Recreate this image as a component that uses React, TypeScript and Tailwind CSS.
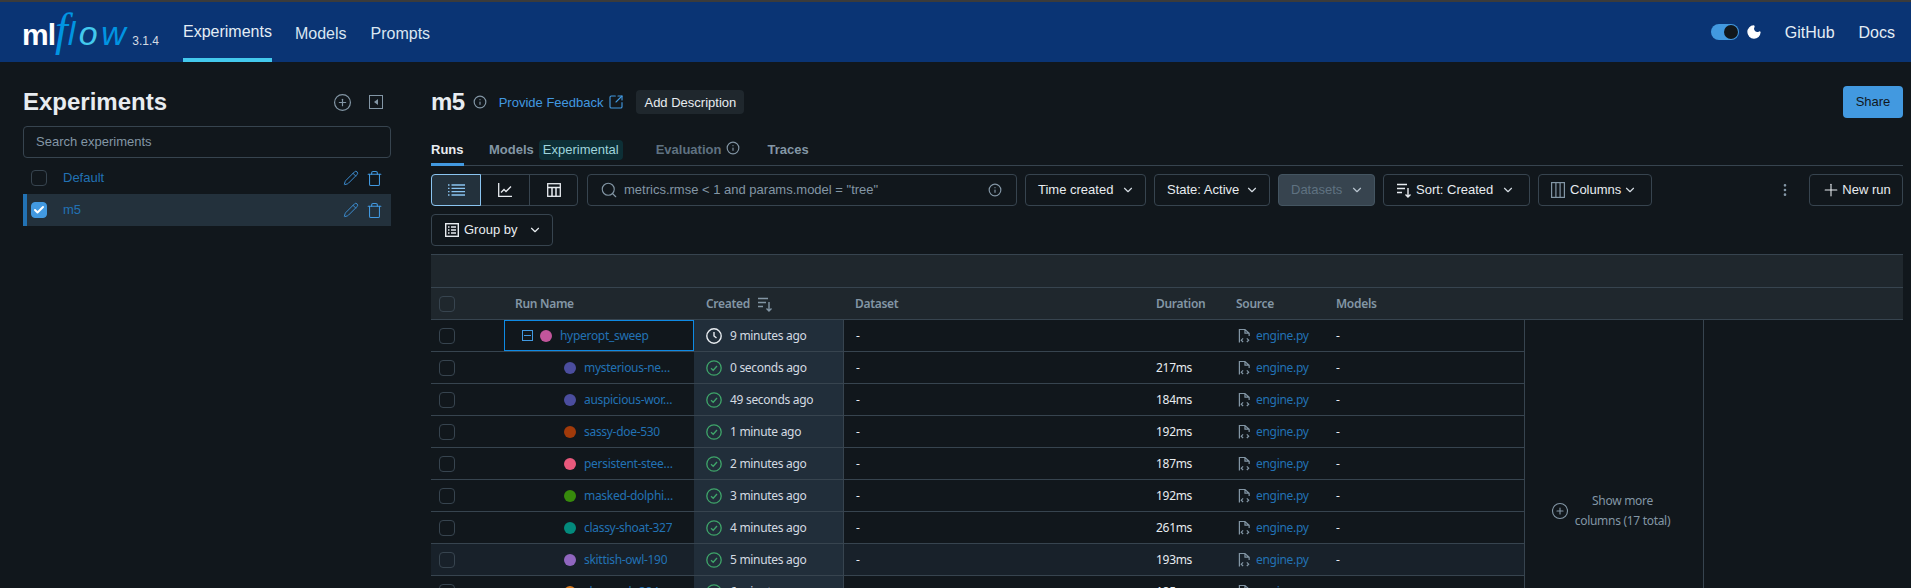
import { Info, SquareArrowOutUpRight, Search, ChevronDown, Pencil, Trash, Check, PlusCircle, Plus, Moon, EllipsisVertical } from 'lucide-react';

const runs = [
  { name: 'mysterious-ne…', color: 'bg-[#4b4d9e]', time: '0 seconds ago', dur: '217ms' },
  { name: 'auspicious-wor…', color: 'bg-[#4b4d9e]', time: '49 seconds ago', dur: '184ms' },
  { name: 'sassy-doe-530', color: 'bg-[#a13a0a]', time: '1 minute ago', dur: '192ms' },
  { name: 'persistent-stee…', color: 'bg-[#e8597c]', time: '2 minutes ago', dur: '187ms' },
  { name: 'masked-dolphi…', color: 'bg-[#378a0c]', time: '3 minutes ago', dur: '192ms' },
  { name: 'classy-shoat-327', color: 'bg-[#038a7c]', time: '4 minutes ago', dur: '261ms' },
  { name: 'skittish-owl-190', color: 'bg-[#9066bf]', time: '5 minutes ago', dur: '193ms', hover: true },
  { name: 'clean-cub-384', color: 'bg-[#d87a1e]', time: '6 minutes ago', dur: '185ms' },
];

function Box({ checked }: { checked?: boolean }) {
  return (
    <span className={`w-4 h-4 rounded-[4px] border flex items-center justify-center shrink-0 ${checked ? 'bg-[#4299e0] border-[#4299e0]' : 'border-[#37444f]'}`}>
      {checked && <Check className="w-3 h-3 text-white" strokeWidth={4} />}
    </span>
  );
}

function SortIcon({ className }: { className: string }) {
  return (
    <svg viewBox="0 0 16 16" fill="none" stroke="currentColor" strokeWidth="1.4" className={className}>
      <path d="M1 2.5h10M1 6.5h8M1 10.5h5M12 6v9M9.5 12.5 12 15l2.5-2.5" />
    </svg>
  );
}

function FileCode() {
  return (
    <svg viewBox="0 0 14 16" fill="none" stroke="#8396a5" strokeWidth="1.3" className="w-[13px] h-4 shrink-0">
      <path d="M1.5 15V1h6l4.5 4v3M7.5 1v4H12" />
      <path d="M5.5 10.5 3.5 12.5l2 2M9.5 10.5l2 2-2 2" />
    </svg>
  );
}

function ListIcon() {
  return (
    <svg viewBox="0 0 17 12" fill="none" stroke="currentColor" strokeWidth="1.3" className="w-[17px] h-3">
      <path d="M3.5 1h13.500M3.500 4.300h13.500M3.500 7.700h13.500M3.500 11h13.500M0 1h1.500M0 4.300h1.500M0 7.700h1.500M0 11h1.500" />
    </svg>
  );
}

function ChartIcon() {
  return (
    <svg viewBox="0 0 14 14" fill="none" stroke="currentColor" strokeWidth="1.3" className="w-[14px] h-[14px]">
      <path d="M.7 0v13.300H14M3 9.500 6 6.500l2 2L13 3.500" />
    </svg>
  );
}

function TableIcon() {
  return (
    <svg viewBox="0 0 14 14" fill="none" stroke="currentColor" strokeWidth="1.3" className="w-[14px] h-[14px]">
      <rect x=".7" y=".7" width="12.600" height="12.600" />
      <path d="M.7 4.500h12.600M5 4.500v8.800M9 4.500v8.800" strokeWidth="1.500" />
    </svg>
  );
}

function ColumnsIcon() {
  return (
    <svg viewBox="0 0 14 16" fill="none" stroke="#8396a5" strokeWidth="1.2" className="w-[14px] h-4 shrink-0">
      <rect x=".6" y=".6" width="12.800" height="14.800" />
      <path d="M4.900.6v14.800M9.100.6v14.800" />
    </svg>
  );
}

function GroupIcon() {
  return (
    <svg viewBox="0 0 14 14" fill="none" stroke="currentColor" strokeWidth="1.4" className="w-[14px] h-[14px] shrink-0">
      <rect x=".7" y=".7" width="12.600" height="12.600" />
      <path d="M3 4h1.500M6 4h5M3 7h1.500M6 7h5M3 10h1.500M6 10h5" />
    </svg>
  );
}

function ToolButton({ label, width, disabled, wide }: { label: React.ReactNode; width: string; disabled?: boolean; wide?: boolean }) {
  return (
    <div className={`h-8 rounded border flex items-center justify-between pl-3 text-[13px] ${wide ? 'pr-[14px]' : 'pr-[10px]'} ${width} ${disabled ? 'bg-[#37444f] border-[#445561] text-[#5f7281]' : 'border-[#37444f] text-[#e8ecf0]'}`}>
      {label}
      <ChevronDown className={`w-[14px] h-[14px] ${disabled ? 'text-[#b8c4ce]' : 'text-[#d4dbe2]'}`} />
    </div>
  );
}

function Row({ run, parent }: { run: (typeof runs)[number] | null; parent?: boolean }) {
  return (
    <div className={`h-8 flex items-stretch border-b border-[#37444f] w-[1093px] shrink-0 ${run?.hover ? 'bg-[#18212a]' : ''}`}>
      <div className="w-[73px] pl-2 flex items-center"><Box /></div>
      <div className={`w-[190px] flex items-center ${parent ? 'outline outline-1 -outline-offset-1 outline-[#0e8ae4] pl-[18px]' : 'pl-[60px]'}`}>
        {parent && (
          <span className="w-[11px] h-[11px] border border-[#4299e0] flex items-center justify-center mr-[7px]">
            <span className="w-[7px] h-px bg-[#4299e0]" />
          </span>
        )}
        <span className={`w-3 h-3 rounded-full shrink-0 ${parent ? 'bg-[#c2559b]' : run!.color}`} />
        <span className="text-[#2272b4] truncate ml-2 pt-px">{parent ? 'hyperopt_sweep' : run!.name}</span>
      </div>
      <div className="w-[150px] bg-[#212e3a] border-r border-[#37444f] flex items-center pl-3 gap-2 text-[#d4dbe2]">
        {parent ? (
          <svg viewBox="0 0 16 16" fill="none" stroke="#e8ecf0" strokeWidth="1.4" className="w-4 h-4"><circle cx="8" cy="8" r="7.200" /><path d="M8 4v4l2.500 2" /></svg>
        ) : (
          <svg viewBox="0 0 16 16" fill="none" stroke="#3fa56a" strokeWidth="1.300" className="w-4 h-4"><circle cx="8" cy="8" r="7.200" /><path d="M5 8.300 7.200 10.300 11 6" /></svg>
        )}
        <span className="pt-px">{parent ? '9 minutes ago' : run!.time}</span>
      </div>
      <div className="w-[312px] pl-3 flex items-center text-[#e8ecf0]">-</div>
      <div className="w-[81px] flex items-center text-[#e8ecf0] pt-px">{run?.dur}</div>
      <div className="w-[99px] pl-px flex items-center gap-[5px]"><FileCode /><span className="text-[#2272b4] pt-px">engine.py</span></div>
      <div className="flex-1 flex items-center text-[#e8ecf0]">-</div>
    </div>
  );
}

export default function App() {
  return (
    <div className="w-[1911px] h-[588px] overflow-hidden bg-[#11171c] text-[13px] text-[#e8ecf0] font-['Liberation_Sans',sans-serif] flex flex-col">
      <div className="h-[2px] bg-[#3b3b3b] shrink-0" />
      <header className="h-[60px] shrink-0 bg-[#0a3474] flex items-stretch pl-[22px] pr-[8px] text-base">
        <div className="flex items-baseline w-[161px] pt-[13px]">
          <span className="text-white font-bold text-[30px] leading-[30px] tracking-[-1px]">ml</span>
          <span className="text-[#0194e2] italic text-[46px] leading-[30px] font-['Liberation_Serif',serif]">f</span>
          <span className="text-[#0194e2] italic text-[34px] leading-[30px] tracking-[3.500px]">l<span className="text-[#43c9ed]">o</span>w</span>
          <span className="text-xs text-[#d4dbe2] ml-[3px]">3.1.4</span>
        </div>
        <nav className="flex text-[#d9e6f2]">
          <span className="h-full flex items-center border-b-4 border-[#43c9ed] pt-[4px] text-[#e4edf5]">Experiments</span>
          <span className="h-full flex items-center pt-[4px] ml-[23px]">Models</span>
          <span className="h-full flex items-center pt-[4px] ml-6">Prompts</span>
        </nav>
        <div className="ml-auto flex items-center text-[#e4edf5]">
          <span className="w-7 h-4 rounded-full bg-[#4299e0] flex items-center justify-end pr-px">
            <span className="w-[14px] h-[14px] rounded-full bg-[#11171c]" />
          </span>
          <Moon className="w-[16px] h-[16px] ml-[7px] text-white fill-white" />
          <span className="ml-[23px] pt-[1px]">GitHub</span>
          <span className="ml-6 mr-[8px] pt-[1px]">Docs</span>
        </div>
      </header>

      <div className="flex-1 flex min-h-0">
        <aside className="w-[431px] shrink-0 pl-[23px] pr-10 pt-[24px]">
          <div className="flex items-center justify-between h-8 mb-[8px]">
            <h1 className="text-2xl font-bold text-[#e8ecf0] leading-8">Experiments</h1>
            <div className="flex items-center gap-[17px] mr-[8px] text-[#8396a5]">
              <PlusCircle className="w-[19px] h-[19px]" strokeWidth={1.500} />
              <span className="w-[14px] h-[14px] border-[1.500px] border-[#8396a5] flex items-center justify-center">
                <span className="w-0 h-0 border-y-[3px] border-y-transparent border-r-[4px] border-r-[#8396a5]" />
              </span>
            </div>
          </div>
          <div className="h-8 rounded border border-[#37444f] flex items-center px-3 text-[#8396a5]">Search experiments</div>
          <div className="mt-[4px] h-8 flex items-center pl-2">
            <Box />
            <span className="ml-4 text-[#2272b4] flex-1">Default</span>
            <Pencil className="w-4 h-4 text-[#3c8cd0] mr-[7px]" strokeWidth={1.500} />
            <Trash className="w-[17px] h-[17px] text-[#4299e0] mr-[8px]" strokeWidth={1.500} />
          </div>
          <div className="h-8 flex items-center pl-1 bg-[#23313c] border-l-4 border-[#2272b4]">
            <Box checked />
            <span className="ml-4 text-[#2272b4] flex-1">m5</span>
            <Pencil className="w-4 h-4 text-[#3c8cd0] mr-[7px]" strokeWidth={1.500} />
            <Trash className="w-[17px] h-[17px] text-[#4299e0] mr-[8px]" strokeWidth={1.500} />
          </div>
        </aside>

        <main className="flex-1 min-w-0 pr-2 pt-6">
          <div className="flex items-center h-8">
            <h2 className="text-2xl font-bold leading-8 tracking-[-0.500px]">m5</h2>
            <Info className="w-[14px] h-[14px] ml-[8px] text-[#8396a5]" />
            <span className="ml-[12px] text-[#4299e0] pt-px">Provide Feedback</span>
            <SquareArrowOutUpRight className="w-4 h-4 ml-[5px] text-[#4299e0]" strokeWidth={1.700} />
            <span className="ml-[12px] h-6 px-2 rounded bg-[#1f272d] flex items-center pt-px">Add Description</span>
            <span className="ml-auto h-8 w-[60px] rounded bg-[#4299e0] text-[#11171c] flex items-center justify-center">Share</span>
          </div>

          <div className="mt-[22px] h-[26px] border-b border-[#37444f] flex items-stretch font-bold text-[#8396a5]">
            <span className="w-[33px] text-[#e8ecf0] border-b-[3px] border-[#4299e0] -mb-px h-[26px]">Runs</span>
            <span className="ml-[25px]">Models</span>
            <span className="ml-[5px] h-[20px] px-1 rounded bg-[#0d2f36] text-[#9fd4dc] font-normal flex items-center">Experimental</span>
            <span className="ml-[33px] text-[#5f7281]">Evaluation</span>
            <Info className="w-[14px] h-[14px] ml-[5px] mt-[1px] text-[#8396a5]" />
            <span className="ml-[27px]">Traces</span>
          </div>

          <div className="mt-2 flex items-center">
            <div className="flex h-8 w-[147px] rounded border border-[#37444f] text-[#e8ecf0]">
              <span className="w-[50px] -m-px rounded-l bg-[#23313c] border border-[#8ac4f0] flex items-center justify-center text-[#8ac4f0]"><ListIcon /></span>
              <span className="w-[49px] ml-px border-r border-[#37444f] flex items-center justify-center"><ChartIcon /></span>
              <span className="flex-1 flex items-center justify-center"><TableIcon /></span>
            </div>
            <div className="ml-[9px] w-[430px] h-8 rounded border border-[#37444f] flex items-center pl-[12px] pr-[14px] text-[#8396a5]">
              <Search className="w-[18px] h-[18px] mr-[6px]" strokeWidth={1.500} />
              <span className="flex-1">metrics.rmse &lt; 1 and params.model = "tree"</span>
              <Info className="w-[14px] h-[14px]" />
            </div>
            <div className="ml-2 flex gap-2">
              <ToolButton width="w-[121px]" label="Time created" />
              <ToolButton width="w-[116px]" label="State: Active" />
              <ToolButton width="w-[97px]" disabled label="Datasets" />
              <ToolButton width="w-[147px]" wide label={<span className="flex items-center gap-[4px]"><SortIcon className="w-4 h-4" />Sort: Created</span>} />
              <ToolButton width="w-[114px]" wide label={<span className="flex items-center gap-[5px]"><ColumnsIcon />Columns</span>} />
            </div>
            <EllipsisVertical className="w-4 h-4 ml-[125px] text-[#8396a5]" />
            <div className="ml-auto h-8 w-[94px] rounded border border-[#37444f] flex items-center justify-center gap-px">
              <Plus className="w-5 h-5" strokeWidth={1.300} />New run
            </div>
          </div>

          <div className="mt-2 h-8 w-[122px] rounded border border-[#37444f] flex items-center justify-between pl-[13px] pr-[10px]">
            <span className="flex items-center gap-[5px]"><GroupIcon />Group by</span>
            <ChevronDown className="w-[14px] h-[14px]" />
          </div>

          <div className="mt-2 border-t border-[#37444f] font-['Noto_Sans',sans-serif] text-xs tracking-[-0.300px]">
            <div className="h-8 bg-[#1f272d]" />
            <div className="h-[33px] bg-[#1f272d] border-y border-[#37444f] flex items-center font-semibold text-[#8396a5]">
              <div className="w-[73px] pl-2"><Box /></div>
              <div className="w-[202px] pl-[11px]">Run Name</div>
              <div className="w-[149px] flex items-center gap-[7px]">Created<SortIcon className="w-4 h-4" /></div>
              <div className="w-[301px]">Dataset</div>
              <div className="w-[80px]">Duration</div>
              <div className="w-[100px]">Source</div>
              <div>Models</div>
            </div>
            <div className="flex">
              <div className="flex flex-col">
                <Row run={null} parent />
                {runs.map((r) => <Row key={r.name} run={r} />)}
              </div>
              <div className="w-[180px] h-[300px] border-l border-r border-[#37444f] flex items-center justify-center gap-[6px] text-[#8396a5] pt-[81px] pr-[7px]">
                <PlusCircle className="w-[18px] h-[18px] shrink-0" strokeWidth={1.500} />
                <span className="text-center leading-[20px]">Show more<br />columns (17 total)</span>
              </div>
            </div>
          </div>
        </main>
      </div>
    </div>
  );
}
